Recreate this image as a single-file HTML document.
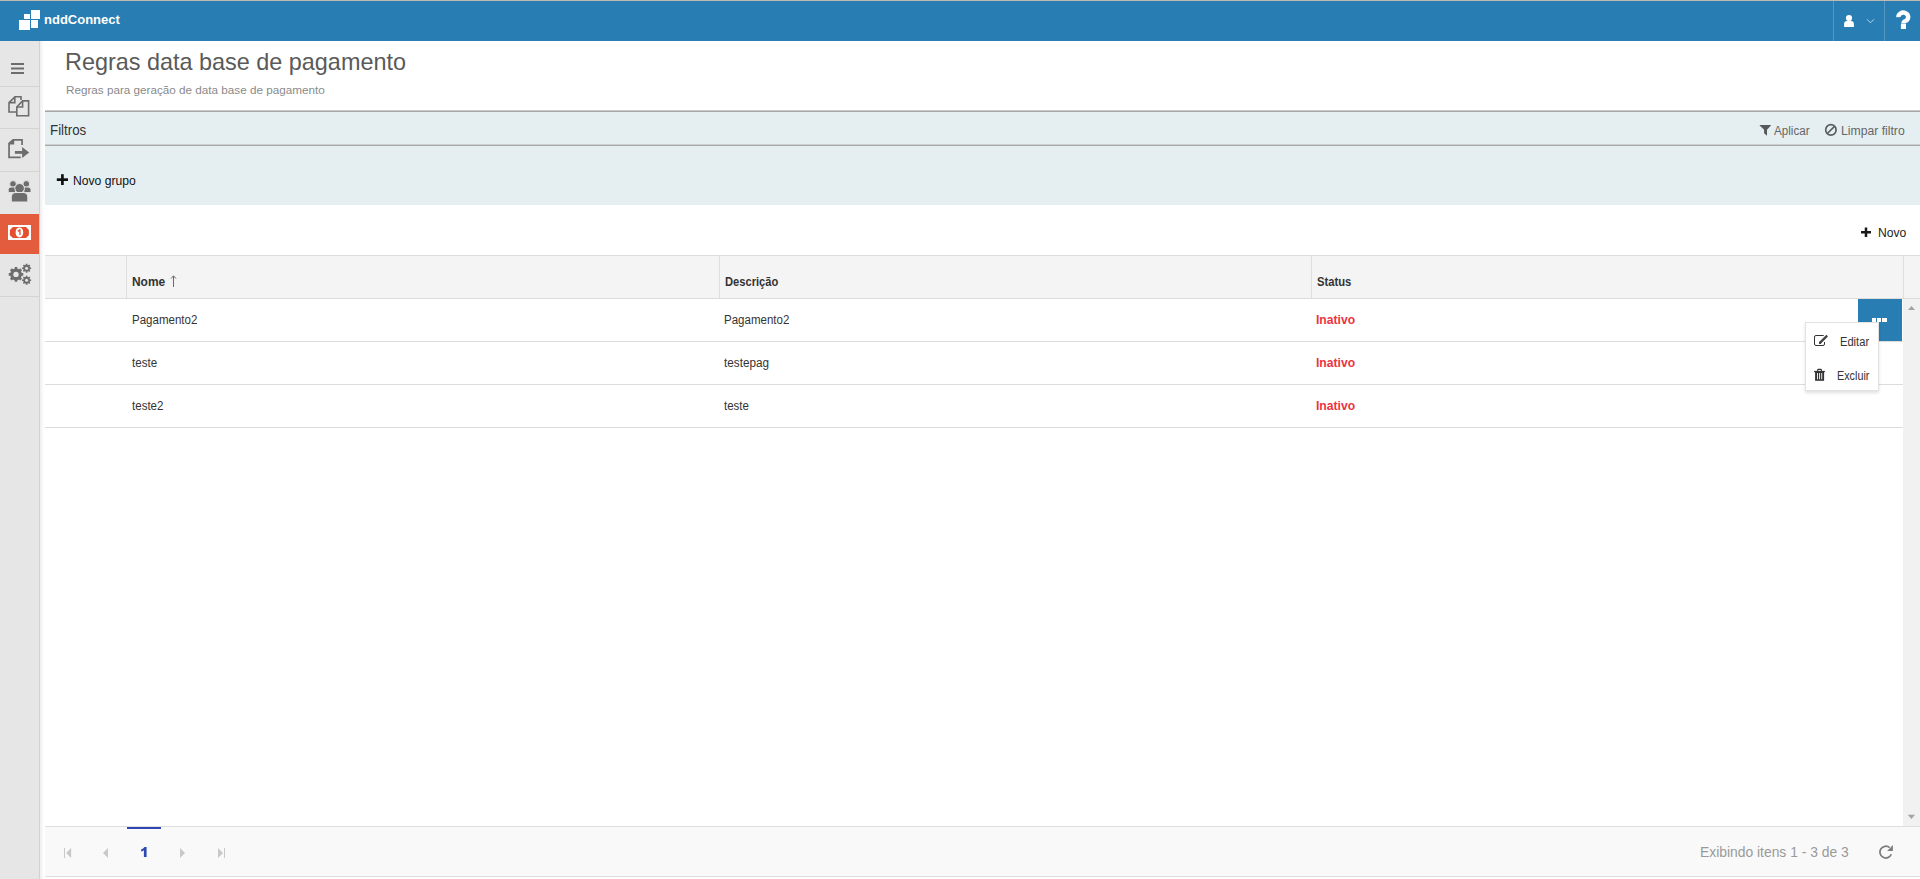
<!DOCTYPE html>
<html><head><meta charset="utf-8">
<style>
html,body{margin:0;padding:0;width:1920px;height:879px;overflow:hidden;background:#fff;font-family:"Liberation Sans",sans-serif;}
.a{position:absolute;}
.t{position:absolute;white-space:nowrap;line-height:1;}
</style></head><body>
<!-- top line + header -->
<div class="a" style="left:0;top:0;width:1920px;height:1px;background:#bdb8b2"></div>
<div class="a" style="left:0;top:1px;width:1920px;height:40px;background:#287db3"></div>
<div class="a" style="left:1833px;top:1px;width:1px;height:40px;background:#5797c2"></div>
<div class="a" style="left:1884px;top:1px;width:1px;height:40px;background:#5797c2"></div>
<!-- logo -->
<div class="a" style="left:31px;top:10px;width:9px;height:9px;background:#fff"></div>
<div class="a" style="left:24px;top:14px;width:6px;height:5px;background:#fff"></div>
<div class="a" style="left:19px;top:20px;width:11px;height:10px;background:#fff"></div>
<div class="a" style="left:31px;top:20px;width:7px;height:8px;background:#fff"></div>
<svg class="a" style="left:1836px;top:0" width="84" height="41" viewBox="1836 0 84 41">
 <g fill="#fff">
  <circle cx="1849" cy="18" r="3.1"/>
  <path d="M1844.1,27 L1844.1,24 Q1844.1,21 1847,21 L1851,21 Q1853.9,21 1853.9,24 L1853.9,27 Z"/>
 </g>
 <path d="M1867,19.3 L1870.5,22.8 L1874,19.3" stroke="#b9d3e6" stroke-width="1" fill="none"/>
 <path d="M1898.4,17.2 A4.9,4.5 0 1 1 1906.4,20.5 Q1903.4,21.6 1903.4,23.5" stroke="#fff" stroke-width="4.4" fill="none"/>
 <rect x="1900.9" y="23.8" width="5.1" height="5.2" fill="#fff"/>
</svg>
<div id="logo" class="t" style="left:44.00px;top:13.00px;font-size:13px;font-weight:bold;color:#fff;transform:scaleX(1.0000);transform-origin:0 0">nddConnect</div>

<!-- sidebar -->
<div class="a" style="left:0;top:41px;width:39px;height:838px;background:#e6e6e6"></div>
<div class="a" style="left:39px;top:41px;width:1px;height:838px;background:#d2d2d2"></div>
<div class="a" style="left:40px;top:41px;width:4px;height:838px;background:linear-gradient(to right,#eeeeee,#fff)"></div>
<div class="a" style="left:0;top:214px;width:39px;height:40px;background:#e25c3d"></div>
<svg class="a" style="left:0;top:0" width="40" height="320" viewBox="0 0 40 320">
 <g fill="#d3d3cf">
  <rect x="0" y="86" width="39" height="1"/>
  <rect x="0" y="128" width="39" height="1"/>
  <rect x="0" y="171" width="39" height="1"/>
  <rect x="0" y="296" width="39" height="1"/>
 </g>
 <g fill="#6d6d6d">
  <rect x="11" y="63" width="13" height="2"/>
  <rect x="11" y="67.5" width="13" height="2"/>
  <rect x="11" y="72" width="13" height="2"/>
 </g>
 <!-- copy -->
 <g stroke="#6d6d6d" stroke-width="1.6" fill="#e6e6e6" stroke-linejoin="miter">
  <path d="M21,100 L21,96.8 L15,96.8 L9,102.6 L9,112 L16.5,112"/>
  <path d="M9,102.6 L14.8,102.6 L14.8,96.8" fill="none"/>
  <path d="M16.8,107 L22.6,100.9 L28.6,100.9 L28.6,115.8 L16.8,115.8 Z"/>
  <path d="M16.8,107 L22.6,107 L22.6,100.9" fill="none"/>
 </g>
 <!-- export -->
 <g fill="#6d6d6d">
  <path d="M8.2,143 L12.8,139 L22.9,139 L22.9,145 L21.2,145 L21.2,140.8 L14.2,140.8 L14.2,144.6 L9.9,144.6 L9.9,156.6 L20.7,156.6 L20.7,158.3 L8.2,158.3 Z"/>
  <rect x="14.9" y="151" width="8" height="2.8"/>
  <path d="M22.1,147.1 L29.2,152.4 L22.1,157.9 Z"/>
 </g>
 <!-- users -->
 <g fill="#6d6d6d" stroke="#e6e6e6" stroke-width="1">
  <circle cx="13" cy="184" r="3.4"/>
  <circle cx="26.3" cy="184" r="3.4"/>
  <path d="M8.2,192.6 L8.2,189.5 Q8.2,187 11,187 L15.5,187 L15.5,192.6 Z"/>
  <path d="M31,192.6 L31,189.5 Q31,187 28.2,187 L23.8,187 L23.8,192.6 Z"/>
  <circle cx="19.6" cy="188.3" r="4.8"/>
  <path d="M11.3,202 L11.3,197.5 Q11.3,192.5 16,192.5 L23,192.5 Q27.8,192.5 27.8,197.5 L27.8,202 Z"/>
 </g>
 <!-- money -->
 <rect x="8" y="225" width="23" height="15" fill="#fff"/>
 <path d="M12.9,226.9 L26,226.9 L28.9,230.1 L28.9,235.2 L26,238 L12.9,238 L9.9,235.2 L9.9,230.1 Z" fill="#e4502f"/>
 <ellipse cx="19.4" cy="232.4" rx="3.8" ry="5" fill="#fff"/>
 <path d="M17.6,230.6 L19.6,229.2 L20.6,229.2 L20.6,234.9 L19.3,234.9 L19.3,231.2 L17.9,231.9 Z" fill="#e4502f"/>
 <!-- gears -->
 <g fill="#6d6d6d">
  <path d="M21.74,273.02 L23.28,273.10 L23.28,275.70 L21.74,275.78 L21.03,277.48 L22.07,278.63 L20.23,280.47 L19.08,279.43 L17.38,280.14 L17.30,281.68 L14.70,281.68 L14.62,280.14 L12.92,279.43 L11.77,280.47 L9.93,278.63 L10.97,277.48 L10.26,275.78 L8.72,275.70 L8.72,273.10 L10.26,273.02 L10.97,271.32 L9.93,270.17 L11.77,268.33 L12.92,269.37 L14.62,268.66 L14.70,267.12 L17.30,267.12 L17.38,268.66 L19.08,269.37 L20.23,268.33 L22.07,270.17 L21.03,271.32 Z"/>
  <path d="M30.00,267.38 L31.13,267.39 L31.13,269.01 L30.00,269.02 L29.58,270.03 L30.37,270.83 L29.23,271.97 L28.43,271.18 L27.42,271.60 L27.41,272.73 L25.79,272.73 L25.78,271.60 L24.77,271.18 L23.97,271.97 L22.83,270.83 L23.62,270.03 L23.20,269.02 L22.07,269.01 L22.07,267.39 L23.20,267.38 L23.62,266.37 L22.83,265.57 L23.97,264.43 L24.77,265.22 L25.78,264.80 L25.79,263.67 L27.41,263.67 L27.42,264.80 L28.43,265.22 L29.23,264.43 L30.37,265.57 L29.58,266.37 Z"/>
  <path d="M30.00,279.38 L31.13,279.39 L31.13,281.01 L30.00,281.02 L29.58,282.03 L30.37,282.83 L29.23,283.97 L28.43,283.18 L27.42,283.60 L27.41,284.73 L25.79,284.73 L25.78,283.60 L24.77,283.18 L23.97,283.97 L22.83,282.83 L23.62,282.03 L23.20,281.02 L22.07,281.01 L22.07,279.39 L23.20,279.38 L23.62,278.37 L22.83,277.57 L23.97,276.43 L24.77,277.22 L25.78,276.80 L25.79,275.67 L27.41,275.67 L27.42,276.80 L28.43,277.22 L29.23,276.43 L30.37,277.57 L29.58,278.37 Z"/>
 </g>
 <g fill="#e6e6e6">
  <circle cx="16" cy="274.4" r="2.7"/>
  <circle cx="26.6" cy="268.2" r="1.5"/>
  <circle cx="26.6" cy="280.2" r="1.5"/>
 </g>
</svg>

<!-- page title -->
<div id="title" class="t" style="left:65.03px;top:50.00px;font-size:24px;color:#5a5a5a;transform:scaleX(0.9753);transform-origin:0 0">Regras data base de pagamento</div>
<div id="sub" class="t" style="left:66.00px;top:85.00px;font-size:11.5px;color:#8a8a8a;transform:scaleX(1.0165);transform-origin:0 0">Regras para geração de data base de pagamento</div>

<!-- filter panel -->
<div class="a" style="left:45px;top:110px;width:1875px;height:95px;background:#e5eff1"></div>
<div class="a" style="left:45px;top:110px;width:1875px;height:1px;background:#c9c9c9"></div>
<div class="a" style="left:45px;top:111px;width:1875px;height:1px;background:#a6a6a6"></div>
<div class="a" style="left:45px;top:144px;width:1875px;height:1px;background:#cdd0d0"></div>
<div class="a" style="left:45px;top:145px;width:1875px;height:1px;background:#a9a9a9"></div>
<div id="filtros" class="t" style="left:50.28px;top:123.00px;font-size:14.5px;color:#333;transform:scaleX(0.9182);transform-origin:0 0">Filtros</div>
<div id="aplicar" class="t" style="left:1774.41px;top:125.00px;font-size:12.5px;color:#666;transform:scaleX(0.9320);transform-origin:0 0">Aplicar</div>
<div id="limpar" class="t" style="left:1841.40px;top:125.00px;font-size:12.5px;color:#666;transform:scaleX(0.9754);transform-origin:0 0">Limpar filtro</div>
<div id="novogrupo" class="t" style="left:72.60px;top:174.00px;font-size:13px;color:#111;transform:scaleX(0.9345);transform-origin:0 0">Novo grupo</div>
<div id="novo" class="t" style="left:1878.00px;top:226.00px;font-size:13px;color:#222;transform:scaleX(0.9333);transform-origin:0 0">Novo</div>

<!-- table header -->
<div class="a" style="left:45px;top:255px;width:1875px;height:44px;background:#f4f4f4"></div>
<div class="a" style="left:45px;top:255px;width:1875px;height:1px;background:#dcdcdc"></div>
<div class="a" style="left:45px;top:298px;width:1875px;height:1px;background:#dcdcdc"></div>
<div class="a" style="left:126px;top:256px;width:1px;height:42px;background:#dedede"></div>
<div class="a" style="left:719px;top:256px;width:1px;height:42px;background:#dedede"></div>
<div class="a" style="left:1311px;top:256px;width:1px;height:42px;background:#dedede"></div>
<div class="a" style="left:1903px;top:256px;width:1px;height:42px;background:#dedede"></div>
<div id="h1" class="t" style="left:132.40px;top:275.00px;font-size:13px;font-weight:bold;color:#333;transform:scaleX(0.9169);transform-origin:0 0">Nome</div>
<div id="h2" class="t" style="left:725.20px;top:275.00px;font-size:13px;font-weight:bold;color:#333;transform:scaleX(0.8581);transform-origin:0 0">Descrição</div>
<div id="h3" class="t" style="left:1317.40px;top:275.00px;font-size:13px;font-weight:bold;color:#333;transform:scaleX(0.8650);transform-origin:0 0">Status</div>

<!-- rows -->
<div class="a" style="left:45px;top:341px;width:1858px;height:1px;background:#dcdcdc"></div>
<div class="a" style="left:45px;top:384px;width:1858px;height:1px;background:#dcdcdc"></div>
<div class="a" style="left:45px;top:427px;width:1858px;height:1px;background:#dcdcdc"></div>
<div id="r1c1" class="t" style="left:131.60px;top:314.00px;font-size:12.5px;color:#333;transform:scaleX(0.9211);transform-origin:0 0">Pagamento2</div>
<div id="r1c2" class="t" style="left:724.20px;top:314.00px;font-size:12.5px;color:#333;transform:scaleX(0.9211);transform-origin:0 0">Pagamento2</div>
<div id="r1c3" class="t" style="left:1316.20px;top:314.00px;font-size:12.5px;font-weight:bold;color:#ec3340;transform:scaleX(0.9701);transform-origin:0 0">Inativo</div>
<div id="r2c1" class="t" style="left:131.80px;top:357.00px;font-size:12.5px;color:#333;transform:scaleX(0.9259);transform-origin:0 0">teste</div>
<div id="r2c2" class="t" style="left:724.20px;top:357.00px;font-size:12.5px;color:#333;transform:scaleX(0.9375);transform-origin:0 0">testepag</div>
<div id="r2c3" class="t" style="left:1316.20px;top:357.00px;font-size:12.5px;font-weight:bold;color:#ec3340;transform:scaleX(0.9701);transform-origin:0 0">Inativo</div>
<div id="r3c1" class="t" style="left:131.80px;top:400.00px;font-size:12.5px;color:#333;transform:scaleX(0.9237);transform-origin:0 0">teste2</div>
<div id="r3c2" class="t" style="left:724.20px;top:400.00px;font-size:12.5px;color:#333;transform:scaleX(0.9185);transform-origin:0 0">teste</div>
<div id="r3c3" class="t" style="left:1316.20px;top:400.00px;font-size:12.5px;font-weight:bold;color:#ec3340;transform:scaleX(0.9701);transform-origin:0 0">Inativo</div>

<!-- scrollbar -->
<div class="a" style="left:1903px;top:299px;width:17px;height:527px;background:#f1f1f1"></div>

<!-- action button -->
<div class="a" style="left:1858px;top:299px;width:44px;height:42px;background:#287db3"></div>
<div class="a" style="left:1872px;top:318px;width:4px;height:4px;background:#fff"></div>
<div class="a" style="left:1877px;top:318px;width:4px;height:4px;background:#fff"></div>
<div class="a" style="left:1882px;top:318px;width:4.5px;height:4px;background:#fff"></div>

<!-- menu -->
<div class="a" style="left:1805px;top:322px;width:74px;height:69px;background:#fff;border:1px solid #e2e2e2;box-sizing:border-box;box-shadow:0 2px 3px rgba(0,0,0,0.12)"></div>
<svg class="a" style="left:1800px;top:320px" width="40" height="70" viewBox="1800 320 40 70">
 <path d="M1823.7,335.5 L1816,335.5 Q1814.5,335.5 1814.5,337 L1814.5,344 Q1814.5,345.5 1816,345.5 L1823,345.5 Q1824.5,345.5 1824.5,344 L1824.5,342" stroke="#333" stroke-width="1" fill="none"/>
 <path d="M1819.7,343.1 L1827.2,335.6" stroke="#444" stroke-width="2.3" fill="none"/>
 <path d="M1818.9,344 L1819.3,341.6 L1821.3,343.6 Z" fill="#333"/>
 <path d="M1817.7,371.2 L1817.7,370 Q1817.7,369.4 1818.3,369.4 L1820.8,369.4 Q1821.4,369.4 1821.4,370 L1821.4,371.2" fill="none" stroke="#333" stroke-width="1.1"/>
 <rect x="1814.1" y="370.9" width="10.8" height="1.3" fill="#333"/>
 <rect x="1815.1" y="372" width="9" height="8.8" fill="#333"/>
 <g fill="#fff"><rect x="1817" y="373" width="0.9" height="6.3"/><rect x="1819.15" y="373" width="0.9" height="6.3"/><rect x="1821.3" y="373" width="0.9" height="6.3"/></g>
</svg>
<div id="editar" class="t" style="left:1840.00px;top:336.00px;font-size:12.5px;color:#333;transform:scaleX(0.8910);transform-origin:0 0">Editar</div>
<div id="excluir" class="t" style="left:1837.40px;top:370.00px;font-size:12.5px;color:#333;transform:scaleX(0.8632);transform-origin:0 0">Excluir</div>

<!-- pager -->
<div class="a" style="left:45px;top:826px;width:1875px;height:50px;background:#f9f9f9"></div>
<div class="a" style="left:45px;top:826px;width:1875px;height:1px;background:#dedede"></div>
<div class="a" style="left:45px;top:876px;width:1875px;height:1px;background:#dedede"></div>
<div class="a" style="left:127px;top:827px;width:34px;height:2px;background:#2f44b5"></div>
<svg class="a" style="left:138px;top:844px" width="12" height="16" viewBox="138 844 12 16"><path id="pg1" d="M143.9,857 L146.6,857 L146.6,847 L144.5,847 Q143.4,848.6 141.1,849.4 L141.1,851.5 Q142.8,851.1 143.9,850.3 Z" fill="#2d48b3"/></svg>
<div id="exib" class="t" style="left:1700.01px;top:845.00px;font-size:14px;color:#999;transform:scaleX(0.9899);transform-origin:0 0">Exibindo itens 1 - 3 de 3</div>
<svg class="a" style="left:0;top:0" width="1920" height="879" viewBox="0 0 1920 879">
 <path d="M1759.7,124.9 L1770.9,124.9 L1770.9,125.6 L1767,129.7 L1767,135.8 L1764.1,133.2 L1764.1,129.7 L1759.7,125.6 Z" fill="#55595b"/>
 <circle cx="1830.9" cy="129.9" r="5.2" stroke="#5a5e60" stroke-width="1.7" fill="none"/>
 <path d="M1827.3,133.5 L1834.5,126.3" stroke="#5a5e60" stroke-width="1.7"/>
 <g fill="#111">
  <rect x="56.8" y="178.3" width="11.2" height="2.7"/>
  <rect x="61.05" y="174.2" width="2.7" height="10.8"/>
 </g>
 <g fill="#1a1a1a">
  <rect x="1861" y="231" width="10" height="2.5"/>
  <rect x="1864.75" y="227.5" width="2.5" height="9.5"/>
 </g>
 <path d="M173.5,276 L173.5,287 M171,278.6 L173.5,275.8 L176,278.6" stroke="#6a6a6a" stroke-width="1" fill="none"/>
 <g fill="#c8c8c8">
  <rect x="64" y="848" width="1" height="10"/>
  <path d="M71.1,848 L71.1,858 L66.2,853 Z"/>
  <path d="M108,848 L108,858 L103,853 Z"/>
  <path d="M180,848 L180,858 L185,853 Z"/>
  <path d="M218,848 L218,858 L223,853 Z"/>
  <rect x="224" y="848" width="1" height="10"/>
 </g>
 <path d="M1891.3,854.3 A5.9,5.9 0 1 1 1889.6,847.6" stroke="#7c7c7c" stroke-width="1.7" fill="none"/>
 <path d="M1892.9,845 L1892.9,850.9 L1887.2,850.9 Z" fill="#7c7c7c"/>
 <path d="M1908,310 L1915,310 L1911.5,306 Z" fill="#a3a3a3"/>
 <path d="M1907.8,814.8 L1915,814.8 L1911.4,819 Z" fill="#a3a3a3"/>
</svg>
</body></html>
